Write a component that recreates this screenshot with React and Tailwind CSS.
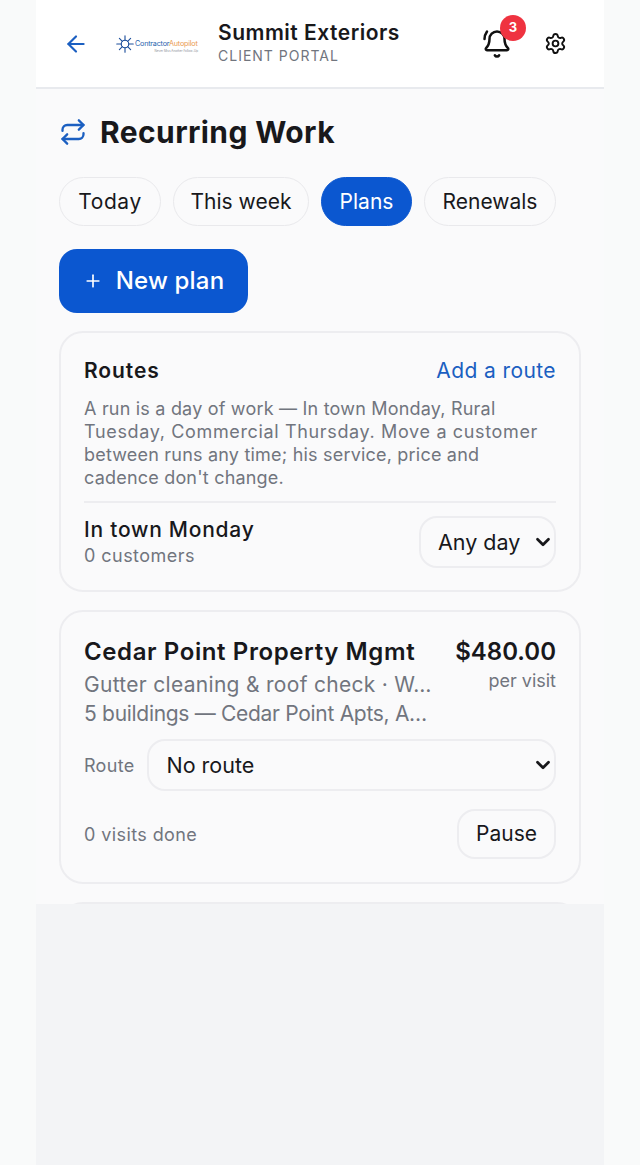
import React from 'react';
import { ArrowLeft, BellRing, ChevronDown, Plus, Repeat, Settings } from 'lucide-react';

const font = { fontFamily: 'Inter' };

function Logo() {
  return (
    <div className="flex flex-col w-[84px] shrink-0">
      <div className="flex items-center gap-[1px]">
        <svg width="18" height="18" viewBox="0 0 24 24" fill="#1d4f9c" stroke="#1d4f9c" strokeWidth="1.5" strokeLinecap="round">
          <circle cx="12" cy="12" r="5" fill="none" />
          <path d="M12 1v6M12 17v6M1 12h6M17 12h6M4.5 4.5l4 4M15.5 15.5l4 4M19.5 4.5l-4 4M8.5 15.5l-4 4" />
        </svg>
        <span className="text-[7.2px] leading-none tracking-[-0.2px] whitespace-nowrap text-[#2a64ad]">Contractor<span className="text-[#ea9a4f]">Autopilot</span></span>
      </div>
      <span className="text-[3px] leading-none text-right pr-[2px] -mt-[3px] text-[#8a8f98]">Never Miss Another Follow-Up</span>
    </div>
  );
}

function Pill({ children, active, width }) {
  return (
    <button type="button" className={`h-[49px] rounded-full text-[21px] border ${width} ${active
      ? 'bg-[#0b57d0] text-white border-[#0b57d0]'
      : 'bg-[#fafafb] text-[#18181b] border-[#e9e9ec]'}`}>
      {children}
    </button>
  );
}

function Select({ children, className }) {
  return (
    <div className={`relative ${className}`}>
      <select className="appearance-none w-full h-[52px] rounded-[18px] border-2 border-[#ededf0] pl-[17px] text-[21.5px] text-[#18181b]">
        <option>{children}</option>
      </select>
      <ChevronDown size={22} strokeWidth={3} color="#18181b" className="absolute right-[2px] top-[15px] pointer-events-none" />
    </div>
  );
}

export default function App() {
  return (
    <div className="w-full h-[1165px] bg-[#f9fafa] flex justify-center overflow-hidden" style={font}>
      <div className="w-[568px] h-full bg-[#f3f4f6]">
        <div className="h-[904px] overflow-hidden bg-[#fafafb]">
          <header className="h-[89px] bg-white border-b-2 border-[#e8eaee] flex items-center pl-[27px] pr-[37px]">
            <ArrowLeft size={26} color="#1b5fc1" strokeWidth={2} className="shrink-0" />
            <div className="ml-[27px]"><Logo /></div>
            <div className="ml-[18px] flex-1 pb-[2px]">
              <div className="text-[21px] leading-[26px] font-semibold tracking-[0.5px] text-[#18181b]">Summit Exteriors</div>
              <div className="text-[14px] leading-[20px] tracking-[1px] text-[#71757e]">CLIENT PORTAL</div>
            </div>
            <div className="relative mr-[32px]">
              <BellRing size={30} color="#111" strokeWidth={2} />
              <span className="absolute -top-[14px] -right-[14px] w-[26px] h-[26px] rounded-full bg-[#ef3340] text-white text-[13px] font-bold flex items-center justify-center">3</span>
            </div>
            <Settings size={23} color="#111" strokeWidth={2} />
          </header>

          <main className="px-[23px]">
            <div className="flex items-center gap-[13px] mt-[23px]">
              <Repeat size={28} color="#1b5fc1" strokeWidth={2} />
              <h1 className="text-[30px] leading-[40px] font-bold tracking-[0.4px] text-[#18181b]">Recurring Work</h1>
            </div>

            <div className="flex gap-[12px] mt-[25px]">
              <Pill width="w-[102px] tracking-[0.6px]">Today</Pill>
              <Pill width="w-[136px]">This week</Pill>
              <Pill active width="w-[91px]">Plans</Pill>
              <Pill width="w-[132px]">Renewals</Pill>
            </div>

            <button type="button" className="mt-[23px] h-[64px] w-[189px] rounded-[18px] bg-[#0b57d0] text-white flex items-center justify-center gap-[13px] text-[24px] font-medium tracking-[0.2px]">
              <Plus size={20} strokeWidth={2} />
              New plan
            </button>

            <section className="mt-[18px] rounded-[24px] border-2 border-[#ededf0] px-[23px] pt-[23px] pb-[22px]">
              <div className="flex items-center justify-between">
                <h2 className="text-[21px] leading-[30px] font-semibold tracking-[0.9px] text-[#18181b]">Routes</h2>
                <a href="#" className="text-[21px] leading-[30px] tracking-[0.4px] text-[#1b5fc1]">Add a route</a>
              </div>
              <p className="mt-[11px] text-[18px] leading-[23px] tracking-[0.2px] text-[#71757e]">A run is a day of work — In town Monday, Rural <span className="tracking-[0.65px]">Tuesday, Commercial Thursday. Move a customer</span> between runs any time; his service, price and cadence don't change.</p>
              <div className="mt-[12px] border-t-2 border-[#ededf0] pt-[13px] flex items-center justify-between">
                <div>
                  <div className="text-[21px] leading-[28px] font-medium tracking-[0.75px] text-[#18181b]">In town Monday</div>
                  <div className="text-[18px] leading-[24px] tracking-[0.45px] text-[#71757e]">0 customers</div>
                </div>
                <Select className="w-[137px]">Any day</Select>
              </div>
            </section>

            <section className="mt-[18px] rounded-[24px] border-2 border-[#ededf0] px-[23px] pt-[24px] pb-[23px]">
              <div className="flex justify-between gap-3">
                <div className="min-w-0 flex-1">
                  <div className="text-[24px] leading-[32px] font-semibold tracking-[0.6px] whitespace-nowrap text-[#18181b]">Cedar Point Property Mgmt</div>
                  <div className="text-[21px] leading-[29px] mt-[2px] tracking-[0.3px] whitespace-nowrap text-[#71757e]">Gutter cleaning &amp; roof check · W…</div>
                  <div className="text-[21px] leading-[29px] tracking-[-0.3px] whitespace-nowrap text-[#71757e]">5 buildings — Cedar Point Apts, A…</div>
                </div>
                <div className="text-right shrink-0">
                  <div className="text-[24px] leading-[32px] font-semibold text-[#18181b]">$480.00</div>
                  <div className="text-[18px] leading-[26px] text-[#71757e]">per visit</div>
                </div>
              </div>
              <div className="flex items-center gap-[13px] mt-[11px]">
                <span className="text-[18px] tracking-[0.3px] text-[#71757e]">Route</span>
                <Select className="flex-1">No route</Select>
              </div>
              <div className="flex items-center justify-between mt-[18px]">
                <span className="text-[18px] tracking-[0.4px] text-[#71757e]">0 visits done</span>
                <button type="button" className="h-[50px] w-[99px] rounded-[18px] border-2 border-[#ededf0] text-[21px] text-[#18181b]">Pause</button>
              </div>
            </section>

            <section className="mt-[18px] h-[60px] rounded-[24px] border-2 border-[#ededf0]" />
          </main>
        </div>
      </div>
    </div>
  );
}
